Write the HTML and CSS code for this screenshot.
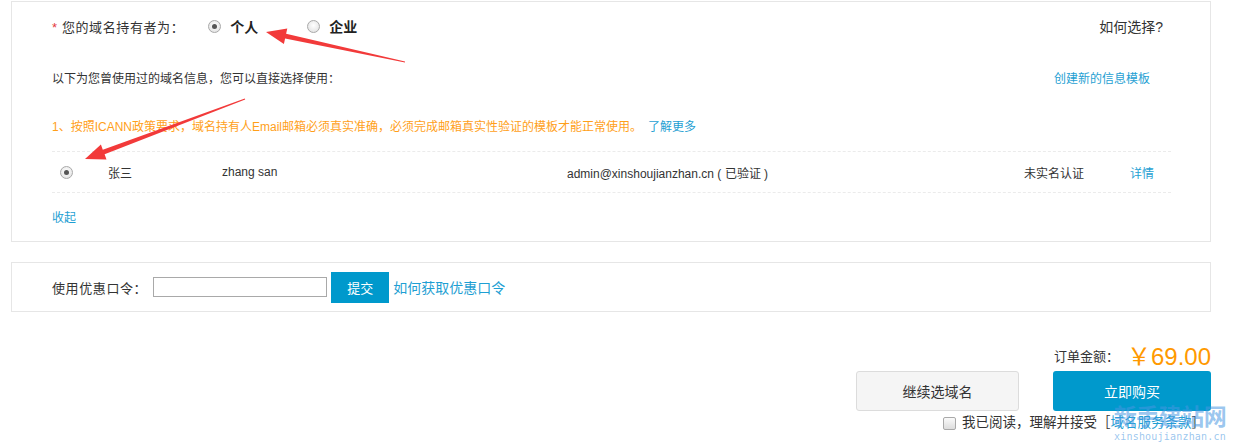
FILE: index.html
```html
<!DOCTYPE html>
<html lang="zh-CN">
<head>
    <meta charset="UTF-8">
    <title>域名持有者信息</title>
    <link rel="stylesheet" href="styles.css">
</head>
<body>
    <div class="page">
        <div class="panel owner-panel">
            <div class="owner-row">
                <div class="owner-left">
                    <span class="label"><em>*</em> 您的域名持有者为：</span>
                    <span class="choice"><i class="radio checked"></i><b>个人</b></span>
                    <span class="choice"><i class="radio"></i><b>企业</b></span>
                </div>
                <a class="how-choose">如何选择?</a>
            </div>

            <div class="hint-row">
                <span>以下为您曾使用过的域名信息，您可以直接选择使用：</span>
                <a class="link create-link">创建新的信息模板</a>
            </div>

            <div class="notice">1、按照ICANN政策要求，域名持有人Email邮箱必须真实准确，必须完成邮箱真实性验证的模板才能正常使用。<a class="link">了解更多</a></div>

            <div class="tpl-row">
                <span class="col-radio"><i class="radio checked"></i></span>
                <span>张三</span>
                <span class="latin">zhang san</span>
                <span class="latin">admin@xinshoujianzhan.cn ( 已验证 )</span>
                <span>未实名认证</span>
                <a class="link">详情</a>
            </div>

            <a class="link collapse">收起</a>
        </div>

        <div class="panel coupon-panel">
            <span class="coupon-label">使用优惠口令：</span>
            <input type="text" class="coupon-input">
            <button type="button" class="submit-btn">提交</button>
            <a class="link coupon-link">如何获取优惠口令</a>
        </div>

        <div class="order">
            <div class="total">订单金额：<span class="price">￥69.00</span></div>
            <div class="actions">
                <button type="button" class="btn-back">继续选域名</button>
                <button type="button" class="btn-buy">立即购买</button>
            </div>
            <div class="agree">
                <i class="checkbox"></i>
                <span>我已阅读，理解并接受［<a class="link">域名服务条款</a>］</span>
            </div>
        </div>
    </div>

    <!-- annotation arrows drawn over the screenshot -->
    <svg class="marks" width="1235" height="447" viewBox="0 0 1235 447">
        <polygon fill="#f23a3a" points="266,32 287.3,28.4 286.1,33.8 405,61.5 405,62.5 285.1,38.6 283.9,44"/>
        <polygon fill="#f23a3a" points="85,159 100.9,144.5 102.8,149.7 244.8,98.5 245.2,99.5 104.6,154.3 106.5,159.5"/>
    </svg>
    <div class="watermark">
        <div class="wm-big">新手建站网</div>
        <div class="wm-small">xinshoujianzhan.cn</div>
    </div>
</body>
</html>
```

FILE: styles.css
```css
body {
    margin: 0;
    padding: 0;
    background: #fff;
    color: #333;
    font-family: "Liberation Sans", "Noto Sans CJK SC", sans-serif;
    font-size: 12px;
}

a {
    cursor: pointer;
}

.page {
    width: 1200px;
    margin-left: 11px;
    padding-top: 1px;
}

.panel {
    border: 1px solid #e6e6e6;
    box-sizing: border-box;
}

.link {
    color: #1f9fd3;
}

/* holder panel */
.owner-panel {
    padding: 12px 39px 13px 40px;
}

.owner-row {
    display: flex;
    justify-content: space-between;
    align-items: center;
    height: 24px;
    font-size: 13px;
}

.owner-left {
    display: flex;
    align-items: center;
}

.label {
    letter-spacing: 0.6px;
}

.label em {
    color: #e4393c;
    font-style: normal;
}

.choice {
    display: flex;
    align-items: center;
    margin-left: 24px;
}

.choice + .choice {
    margin-left: 49px;
}

.choice b {
    font-size: 14px;
    margin-left: 9px;
    color: #222;
}

.how-choose {
    color: #333;
    font-size: 14px;
    margin-right: 8px;
}

.radio {
    display: inline-block;
    width: 11px;
    height: 11px;
    border: 1px solid #a9a9a9;
    border-radius: 50%;
    background: radial-gradient(circle at 50% 40%, #fff, #ddd);
    position: relative;
}

.radio.checked::after {
    content: "";
    position: absolute;
    left: 3px;
    top: 3px;
    width: 5px;
    height: 5px;
    border-radius: 50%;
    background: #555;
}

.hint-row {
    display: flex;
    justify-content: space-between;
    line-height: 20px;
    margin-top: 31px;
}

.create-link {
    margin-right: 21px;
}

.notice {
    color: #ff9f1a;
    line-height: 20px;
    margin-top: 28px;
}

.notice .link {
    margin-left: 6px;
}

.tpl-row {
    display: grid;
    grid-template-columns: 56px 114px 345px 457px 106px 1fr;
    align-items: center;
    height: 40px;
    margin-top: 14px;
    border-top: 1px dashed #ebebeb;
    border-bottom: 1px dashed #ebebeb;
    color: #333;
}

.col-radio {
    padding-left: 8px;
    display: flex;
}

.latin {
    font-family: "Liberation Sans", Arial, sans-serif;
}

.collapse {
    display: block;
    line-height: 20px;
    margin-top: 15px;
}

/* coupon panel */
.coupon-panel {
    margin-top: 20px;
    height: 50px;
    padding: 0 40px;
    display: flex;
    align-items: center;
    font-size: 13px;
}

.coupon-label {
    letter-spacing: 0.6px;
}

.coupon-input {
    width: 174px;
    height: 20px;
    box-sizing: border-box;
    border: 1px solid #a9a9a9;
    margin: 0 0 0 6px;
    padding: 0 4px;
}

.submit-btn {
    width: 58px;
    height: 31px;
    margin-left: 4px;
    border: none;
    background: #0099cc;
    color: #fff;
    font-family: inherit;
    font-size: 13px;
}

.coupon-link {
    font-size: 14px;
    margin-left: 4px;
}

/* order summary */
.order {
    display: flex;
    flex-direction: column;
    align-items: flex-end;
    margin-top: 31px;
}

.total {
    font-size: 13px;
    line-height: 28px;
    display: flex;
    align-items: center;
}

.price {
    color: #ff9900;
    font-size: 24px;
    margin-left: 8px;
}

.actions {
    display: flex;
    gap: 34px;
}

.actions button {
    height: 40px;
    border-radius: 3px;
    font-family: inherit;
    font-size: 14px;
}

.btn-back {
    width: 163px;
    background: #f5f5f5;
    border: 1px solid #dcdcdc;
    color: #333;
}

.btn-buy {
    width: 158px;
    background: #0099cc;
    border: none;
    color: #fff;
}

.agree {
    display: flex;
    align-items: center;
    line-height: 20px;
    margin-top: 2px;
    margin-right: 6px;
    font-size: 13.5px;
}

.checkbox {
    width: 11px;
    height: 11px;
    border: 1px solid #a9a9a9;
    border-radius: 2px;
    background: linear-gradient(#fafafa, #ddd);
    margin-right: 6px;
}

/* overlays */
.marks {
    position: absolute;
    left: 0;
    top: 0;
    pointer-events: none;
}

.watermark {
    position: absolute;
    left: 1111px;
    top: 403px;
    width: 118px;
    color: rgba(70, 150, 225, 0.55);
    text-align: center;
    white-space: nowrap;
    pointer-events: none;
}

.wm-big {
    font-size: 23px;
    font-weight: bold;
    line-height: 28px;
    letter-spacing: -0.5px;
}

.wm-small {
    font-size: 10px;
    line-height: 11px;
    font-family: "DejaVu Sans Mono", monospace;
    letter-spacing: 0.2px;
}
```
